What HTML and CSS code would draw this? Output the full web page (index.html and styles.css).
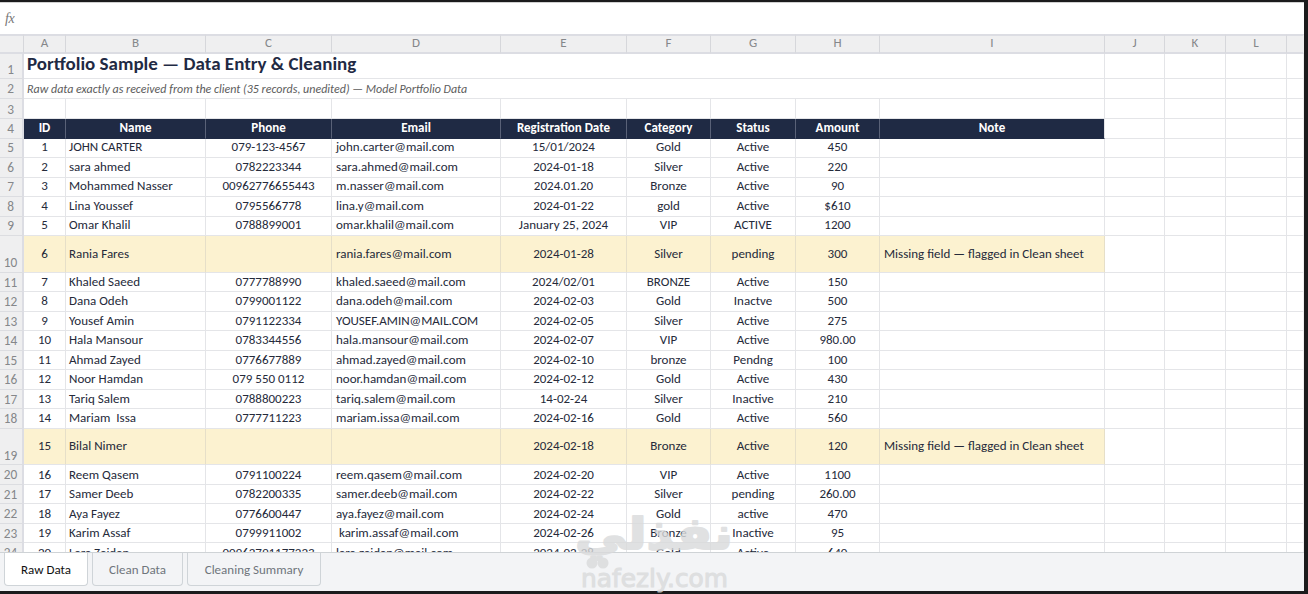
FILE: index.html
```html
<!DOCTYPE html>
<html lang="en">

<head>
    <meta charset="UTF-8">
    <meta name="viewport" content="width=device-width, initial-scale=1.0">
    <title>Portfolio Sample</title>
    <link rel="stylesheet" href="styles.css">
</head>

<body>
    <div class="app">
        <div class="formula"><span class="fx">fx</span></div>
        <div class="sheet">
            <div class="row letters">
                <div class="num"></div>
                <div>A</div><div>B</div><div>C</div><div>D</div><div>E</div><div>F</div><div>G</div><div>H</div><div>I</div><div>J</div><div>K</div><div>L</div><div></div>
            </div>
            <div class="row title">
                <div class="num">1</div>
                <div class="merged"><span>Portfolio Sample — Data Entry &amp; Cleaning</span></div>
                <div></div><div></div><div></div><div></div>
            </div>
            <div class="row subtitle">
                <div class="num">2</div>
                <div class="merged"><span>Raw data exactly as received from the client (35 records, unedited) — Model Portfolio Data</span></div>
                <div></div><div></div><div></div><div></div>
            </div>
            <div class="row blank">
                <div class="num">3</div>
                <div></div><div></div><div></div><div></div><div></div><div></div><div></div><div></div><div></div><div></div><div></div><div></div><div></div>
            </div>
            <div class="row head">
                <div class="num">4</div>
                <div>ID</div><div>Name</div><div>Phone</div><div>Email</div><div>Registration Date</div><div>Category</div><div>Status</div><div>Amount</div><div>Note</div><div></div><div></div><div></div><div></div>
            </div>
            <div id="records"></div>
        </div>
        <div class="tabs">
            <div class="tab active">Raw Data</div>
            <div class="tab clean">Clean Data</div>
            <div class="tab summary">Cleaning Summary</div>
        </div>
        <svg class="watermark" width="164" height="90" viewBox="0 0 164 90">
            <text class="wm-ar" x="81" y="45" text-anchor="middle" textLength="158" lengthAdjust="spacingAndGlyphs">نفذلي</text>
            <circle class="wm-dot" cx="19" cy="59" r="5.5" />
            <circle class="wm-dot" cx="30" cy="59" r="5.5" />
            <text class="wm-en" x="8" y="83" textLength="147" lengthAdjust="spacingAndGlyphs">nafezly.com</text>
        </svg>
    </div>
    <script>
        let data = [
            ['JOHN CARTER', '079-123-4567', 'john.carter@mail.com', '15/01/2024', 'Gold', 'Active', '450'],
            ['sara ahmed', '0782223344', 'sara.ahmed@mail.com', '2024-01-18', 'Silver', 'Active', '220'],
            ['Mohammed Nasser', '00962776655443', 'm.nasser@mail.com', '2024.01.20', 'Bronze', 'Active', '90'],
            ['Lina Youssef', '0795566778', 'lina.y@mail.com', '2024-01-22', 'gold', 'Active', '$610'],
            ['Omar Khalil', '0788899001', 'omar.khalil@mail.com', 'January 25, 2024', 'VIP', 'ACTIVE', '1200'],
            ['Rania Fares', '', 'rania.fares@mail.com', '2024-01-28', 'Silver', 'pending', '300', 'Missing field — flagged in Clean sheet'],
            ['Khaled Saeed', '0777788990', 'khaled.saeed@mail.com', '2024/02/01', 'BRONZE', 'Active', '150'],
            ['Dana Odeh', '0799001122', 'dana.odeh@mail.com', '2024-02-03', 'Gold', 'Inactve', '500'],
            ['Yousef Amin', '0791122334', 'YOUSEF.AMIN@MAIL.COM', '2024-02-05', 'Silver', 'Active', '275'],
            ['Hala Mansour', '0783344556', 'hala.mansour@mail.com', '2024-02-07', 'VIP', 'Active', '980.00'],
            ['Ahmad Zayed', '0776677889', 'ahmad.zayed@mail.com', '2024-02-10', 'bronze', 'Pendng', '100'],
            ['Noor Hamdan', '079 550 0112', 'noor.hamdan@mail.com', '2024-02-12', 'Gold', 'Active', '430'],
            ['Tariq Salem', '0788800223', 'tariq.salem@mail.com', '14-02-24', 'Silver', 'Inactive', '210'],
            ['Mariam  Issa', '0777711223', 'mariam.issa@mail.com', '2024-02-16', 'Gold', 'Active', '560'],
            ['Bilal Nimer', '', '', '2024-02-18', 'Bronze', 'Active', '120', 'Missing field — flagged in Clean sheet'],
            ['Reem Qasem', '0791100224', 'reem.qasem@mail.com', '2024-02-20', 'VIP', 'Active', '1100'],
            ['Samer Deeb', '0782200335', 'samer.deeb@mail.com', '2024-02-22', 'Silver', 'pending', '260.00'],
            ['Aya Fayez', '0776600447', 'aya.fayez@mail.com', '2024-02-24', 'Gold', 'active', '470'],
            ['Karim Assaf', '0799911002', ' karim.assaf@mail.com', '2024-02-26', 'Bronze', 'Inactive', '95'],
            ['Lara Zaidan', '00962791177223', 'lara.zaidan@mail.com', '2024-02-28', 'Gold', 'Active', '640']
        ]

        let html = ''
        for (let i = 0; i < data.length; i++) {
            let note = data[i][7] || ''
            html += '<div class="row record' + (note ? ' flagged' : '') + '">'
            html += '<div class="num">' + (i + 5) + '</div><div>' + (i + 1) + '</div>'
            for (let j = 0; j < 7; j++) {
                html += '<div>' + data[i][j] + '</div>'
            }
            html += '<div>' + note + '</div><div></div><div></div><div></div><div></div></div>'
        }
        document.querySelector('#records').innerHTML = html
    </script>
</body>

</html>
```
FILE: styles.css
```css
* {
    box-sizing: border-box;
    margin: 0;
    padding: 0;
}

body {
    width: 1308px;
    height: 594px;
    overflow: hidden;
    background-color: #1b1b1c;
    font-family: Calibri, Carlito, Lato, sans-serif;
}

.app {
    position: relative;
    display: flex;
    flex-direction: column;
    width: 1304px;
    height: 591px;
    padding-top: 2px;
}

.formula {
    flex: none;
    height: 32px;
    padding: 5px 0 0 5px;
    background-color: #fff;
    border-top: 1px solid #d0d0d0;
}

.fx {
    font-family: "Liberation Serif", serif;
    font-size: 14px;
    font-style: italic;
    line-height: 18px;
    letter-spacing: -0.5px;
    color: #777;
}

.sheet {
    flex: 1;
    min-height: 0;
    overflow: hidden;
    background-color: #fff;
}

/* rows */
.row {
    display: grid;
    grid-template-columns: 24px 42px 140px 126px 169px 126px 84px 85px 84px 225px 60px 61px 61px 17px;
    grid-template-rows: 100%;
    height: 19.5px;
    font-size: 13px;
    line-height: 16px;
    color: #252a3a;
}

.row > div {
    display: flex;
    align-items: center;
    justify-content: center;
    border-right: 1px solid #e4e5e8;
    border-bottom: 1px solid #e4e5e8;
    white-space: pre;
    min-width: 0;
}

.row > .num {
    align-items: flex-end;
    padding-right: 1px;
    padding-bottom: 0.5px;
    background-color: #efeff0;
    border-right: 2px solid #dcdde3;
    border-bottom: 1px solid #dcdde1;
    font-size: 13.3px;
    line-height: 17px;
    color: #85878a;
}

.row > div:last-child {
    border-right: 1px solid #efefef;
}

.letters {
    height: 20px;
    line-height: 14px;
}

.letters > div,
.letters > .num {
    padding-bottom: 2px;
    background-color: #efeff0;
    border-top: 2px solid #dcdde3;
    border-right: 1px solid #d6d7db;
    border-bottom: 2px solid #dcdde3;
    font-size: 13px;
    color: #85878a;
}

.title {
    height: 25px;
}

.row > .merged {
    grid-column: 2 / 11;
    justify-content: flex-start;
    padding-left: 3px;
}

.title .merged {
    padding-bottom: 4px;
    font-size: 19px;
    font-weight: bold;
    color: #1f2a44;
}

.subtitle .merged {
    padding-top: 1px;
    font-size: 12px;
    font-style: italic;
    color: #5c5c5c;
}

.blank {
    height: 20.5px;
}

.head > div:nth-child(n+2):nth-child(-n+10) {
    background-color: #1f2a44;
    border-right-color: #596177;
    border-bottom-color: #1f2a44;
    font-weight: bold;
    color: #fff;
}

.head > div:nth-child(10) {
    background-clip: padding-box;
    border-right-color: #e4e5e8 !important;
}

.record > div:nth-child(3),
.record > div:nth-child(5),
.record > div:nth-child(10) {
    justify-content: flex-start;
    padding-left: 3px;
}

.record > div:nth-child(5),
.record > div:nth-child(10) {
    padding-left: 4px;
}

/* half pixel rows: keeps the text on the right line */
.record:nth-child(-n+5) > div {
    padding-bottom: 1px;
}

.record:nth-child(n+16) > div:not(.num) {
    padding-top: 1px;
}

.flagged {
    height: 36.5px;
}

.flagged > div:nth-child(n+2):nth-child(-n+10) {
    background-color: #fcf2d0;
    border-right-color: #e6dfc8;
}

/* sheet tabs */
.tabs {
    display: flex;
    flex: none;
    gap: 4px;
    height: 39px;
    padding-left: 4px;
    background-color: #f3f4f6;
    border-top: 1px solid #cfd3d6;
}

.tab {
    width: 84px;
    height: 33px;
    border: 1px solid #cfd4d8;
    border-top: none;
    border-radius: 0 0 4px 4px;
    font-size: 13px;
    line-height: 34px;
    text-align: center;
    color: #6f757c;
}

.tab.active {
    background-color: #fff;
    color: #111;
}

.tab.clean {
    width: 91px;
}

.tab.summary {
    width: 134px;
}

.watermark {
    position: absolute;
    left: 573px;
    top: 504px;
    opacity: 0.8;
    pointer-events: none;
}

.wm-ar,
.wm-en,
.wm-dot {
    fill: #d9dadb;
}

.wm-ar,
.wm-en {
    stroke: #d9dadb;
    stroke-linejoin: round;
}

.wm-ar {
    font-family: "DejaVu Sans", sans-serif;
    font-size: 44px;
    font-weight: bold;
    stroke-width: 2px;
}

.wm-en {
    font-family: "DejaVu Sans", sans-serif;
    font-size: 24px;
    stroke-width: 1px;
}
```
